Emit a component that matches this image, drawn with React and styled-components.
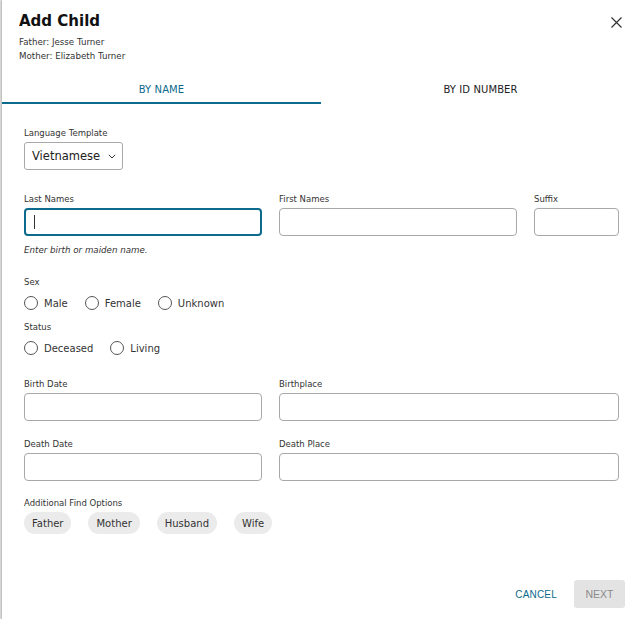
import React from 'react';
import styled, { createGlobalStyle } from 'styled-components';

const GlobalStyle = createGlobalStyle`
  html, body {
    margin: 0;
    padding: 0;
    background: #e9e9e9;
  }
  body {
    font-family: "DejaVu Sans", Verdana, sans-serif;
    color: #222;
  }
`;

const blue = '#0c6a8c';

const Page = styled.div`
  width: 640px;
  height: 619px;
  display: flex;
  overflow: hidden;
`;

const Modal = styled.div`
  flex: 1;
  margin-left: 2px;
  background: #fff;
  box-shadow: -1px 0 2px rgba(0, 0, 0, 0.25);
  display: flex;
  flex-direction: column;
  position: relative;
`;

const Header = styled.div`
  padding: 12px 17px 0;
  height: 64px;
`;

const Title = styled.h1`
  margin: 0 0 5px;
  font-size: 15px;
  line-height: 18px;
  font-weight: bold;
  color: #111;
`;

const Parent = styled.div`
  font-size: 8.7px;
  line-height: 14px;
  color: #333;
`;

const CloseButton = styled.button`
  position: absolute;
  top: 15px;
  right: 17px;
  width: 14px;
  height: 14px;
  padding: 0;
  border: 0;
  background: none;
  display: flex;
  align-items: center;
  justify-content: center;
`;

const Tabs = styled.div`
  display: flex;
`;

const Tab = styled.div`
  flex: 1;
  height: 26px;
  display: flex;
  align-items: center;
  justify-content: center;
  font-size: 10px;
  letter-spacing: 0.1px;
  color: ${({ active }) => (active ? blue : '#222')};
  border-bottom: 2px solid ${({ active }) => (active ? blue : 'transparent')};
`;

const Body = styled.div`
  padding: 23px 21px 0 22px;
  display: flex;
  flex-direction: column;
`;

const Label = styled.div`
  font-size: 8.5px;
  line-height: 12px;
  color: #333;
  margin-bottom: ${({ gap }) => gap ?? 3}px;
  white-space: nowrap;
`;

const Select = styled.div`
  width: 99px;
  height: 28px;
  box-sizing: border-box;
  border: 1px solid #a8a8a8;
  border-radius: 3px;
  display: flex;
  align-items: center;
  padding: 0 0 0 7px;
  gap: 8px;
  font-size: 11.5px;
  color: #222;
`;

const Row = styled.div`
  display: grid;
  grid-template-columns: ${({ cols }) => cols};
  column-gap: 17px;
  margin-top: ${({ top }) => top}px;
`;

const Field = styled.div`
  display: flex;
  flex-direction: column;
`;

const Input = styled.div`
  height: 28px;
  box-sizing: border-box;
  border: ${({ focused }) => (focused ? `2px solid ${blue}` : '1px solid #a8a8a8')};
  border-radius: 4px;
  display: flex;
  align-items: center;
  padding-left: 8px;
`;

const Caret = styled.span`
  width: 1px;
  height: 14px;
  background: #333;
`;

const Hint = styled.div`
  font-size: 8.7px;
  font-style: italic;
  color: #333;
  margin-top: 9px;
`;

const Group = styled.div`
  margin-top: ${({ top }) => top}px;
`;

const Radios = styled.div`
  display: flex;
  gap: 17px;
  margin-top: 8px;
`;

const RadioItem = styled.label`
  display: flex;
  align-items: center;
  gap: 6px;
  font-size: 10px;
  color: #333;
`;

const Circle = styled.span`
  width: 14px;
  height: 14px;
  box-sizing: border-box;
  border: 1px solid #555;
  border-radius: 50%;
`;

const Chips = styled.div`
  display: flex;
  gap: 17px;
  margin-top: 3px;
`;

const Chip = styled.div`
  height: 22px;
  padding: 0 8px;
  border-radius: 11px;
  background: #ebebeb;
  display: flex;
  align-items: center;
  font-size: 10px;
  color: #333;
`;

const Footer = styled.div`
  margin-top: auto;
  padding: 0 15px 11px 0;
  display: flex;
  justify-content: flex-end;
  align-items: center;
  gap: 17px;
`;

const TextButton = styled.button`
  border: 0;
  background: none;
  padding: 0;
  font-family: "Liberation Sans", Arial, sans-serif;
  font-size: 10px;
  color: ${blue};
  letter-spacing: 0.2px;
`;

const DisabledButton = styled.button`
  width: 51px;
  height: 28px;
  border: 0;
  border-radius: 3px;
  background: #e3e3e3;
  font-family: "Liberation Sans", Arial, sans-serif;
  font-size: 10.5px;
  color: #8a8a8a;
`;

const Radio = ({ children }) => (
  <RadioItem>
    <Circle />
    {children}
  </RadioItem>
);

const App = () => (
  <Page>
    <GlobalStyle />
    <Modal>
      <CloseButton>
        <svg width="11" height="11" viewBox="0 0 11 11">
          <path d="M0.5 0.5L10.5 10.5M10.5 0.5L0.5 10.5" stroke="#333" strokeWidth="1.2" />
        </svg>
      </CloseButton>
      <Header>
        <Title>Add Child</Title>
        <Parent>Father: Jesse Turner</Parent>
        <Parent>Mother: Elizabeth Turner</Parent>
      </Header>
      <Tabs>
        <Tab active>BY NAME</Tab>
        <Tab>BY ID NUMBER</Tab>
      </Tabs>
      <Body>
        <Field>
          <Label>Language Template</Label>
          <Select>
            Vietnamese
            <svg width="8" height="5" viewBox="0 0 8 5">
              <path d="M0.8 0.8L4 4L7.2 0.8" stroke="#333" strokeWidth="1" fill="none" />
            </svg>
          </Select>
        </Field>

        <Row cols="238px 238px 85px" top={23}>
          <Field>
            <Label>Last Names</Label>
            <Input focused><Caret /></Input>
          </Field>
          <Field>
            <Label>First Names</Label>
            <Input />
          </Field>
          <Field>
            <Label>Suffix</Label>
            <Input />
          </Field>
        </Row>
        <Hint>Enter birth or maiden name.</Hint>

        <Group top={21}>
          <Label gap={0}>Sex</Label>
          <Radios>
            <Radio>Male</Radio>
            <Radio>Female</Radio>
            <Radio>Unknown</Radio>
          </Radios>
        </Group>
        <Group top={11}>
          <Label gap={0}>Status</Label>
          <Radios>
            <Radio>Deceased</Radio>
            <Radio>Living</Radio>
          </Radios>
        </Group>

        <Row cols="238px 340px" top={23}>
          <Field>
            <Label>Birth Date</Label>
            <Input />
          </Field>
          <Field>
            <Label>Birthplace</Label>
            <Input />
          </Field>
        </Row>
        <Row cols="238px 340px" top={17}>
          <Field>
            <Label>Death Date</Label>
            <Input />
          </Field>
          <Field>
            <Label>Death Place</Label>
            <Input />
          </Field>
        </Row>

        <Group top={16}>
          <Label gap={0}>Additional Find Options</Label>
          <Chips>
            <Chip>Father</Chip>
            <Chip>Mother</Chip>
            <Chip>Husband</Chip>
            <Chip>Wife</Chip>
          </Chips>
        </Group>
      </Body>
      <Footer>
        <TextButton>CANCEL</TextButton>
        <DisabledButton>NEXT</DisabledButton>
      </Footer>
    </Modal>
  </Page>
);

export default App;
